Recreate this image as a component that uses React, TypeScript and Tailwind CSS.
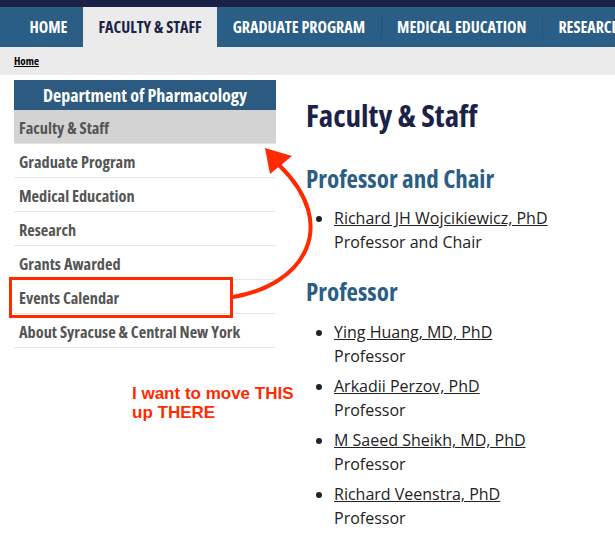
import React from "react";

const cond = "font-['Open_Sans','DejaVu_Sans_Condensed',sans-serif] [font-stretch:75%] font-bold";

const navItems = ["HOME", "FACULTY & STAFF", "GRADUATE PROGRAM", "MEDICAL EDUCATION", "RESEARCH"];
const sideItems = [
  "Faculty & Staff",
  "Graduate Program",
  "Medical Education",
  "Research",
  "Grants Awarded",
  "Events Calendar",
  "About Syracuse & Central New York",
];

const professors = [
  "Ying Huang, MD, PhD",
  "Arkadii Perzov, PhD",
  "M Saeed Sheikh, MD, PhD",
  "Richard Veenstra, PhD",
];

export default function App() {
  return (
    <div className="relative w-[615px] h-[549px] overflow-hidden bg-white font-['Open_Sans',sans-serif]">
      <div className="h-[7px] bg-[#1b2147]" />
      <nav className="h-[40px] bg-[#2a5e86] flex items-stretch pl-[14px] whitespace-nowrap">
        {navItems.map((n, i) => {
          const active = i === 1;
          return (
            <div key={n} className="flex items-center shrink-0">
              {i >= 3 && <div className="w-px h-[24px] bg-[#1f5580]" />}
              <div
                className={`${cond} h-full flex items-center px-[15.5px] text-[16px] ${
                  active ? "bg-[#ebebeb] text-[#1b2147]" : "text-white"
                }`}
              >
                {n}
              </div>
            </div>
          );
        })}
      </nav>
      <div className="h-[28px] bg-[#ebebeb] pl-[14px] flex items-center">
        <span className={`${cond} text-[11px] text-black underline`}>Home</span>
      </div>
      <div className="flex pt-[5px]">
        <aside className="ml-[14px] w-[262px] shrink-0">
          <div className={`${cond} h-[30px] pt-[1px] bg-[#2c5a80] text-white text-[18px] flex items-center justify-center`}>
            Department of Pharmacology
          </div>
          {sideItems.map((s, i) => (
            <div
              key={s}
              className={`${cond} h-[34px] pt-[4px] flex items-center pl-[5px] text-[16.3px] text-[#555] border-b border-[#e6e6e6] ${
                i === 0 ? "bg-[#d3d3d3]" : ""
              }`}
            >
              {s}
            </div>
          ))}
        </aside>
        <main className="ml-[30px] text-[16px] leading-[23.5px] text-[#222]">
          <h1 className={`${cond} text-[31px] leading-[36px] text-[#1b2147] mt-[17px]`}>Faculty &amp; Staff</h1>
          <h2 className={`${cond} text-[25px] leading-[30px] text-[#2b5e85] mt-[30px]`}>Professor and Chair</h2>
          <ul className="list-disc pl-[28px] mt-[14px]">
            <li>
              <span className="underline">Richard JH Wojcikiewicz, PhD</span>
              <br />
              Professor and Chair
            </li>
          </ul>
          <h2 className={`${cond} text-[25px] leading-[30px] text-[#2b5e85] mt-[22px]`}>Professor</h2>
          <ul className="list-disc pl-[28px] mt-[15px]">
            {professors.map((p) => (
              <li key={p} className="mb-[7px]">
                <span className="underline">{p}</span>
                <br />
                Professor
              </li>
            ))}
          </ul>
        </main>
      </div>

      {/* annotation overlay */}
      <div className="absolute left-[9px] top-[277px] w-[224px] h-[41px] border-[3px] border-[#ff2a00]" />
      <div className="absolute left-[132px] top-[384px] text-[17px] leading-[19px] font-bold text-[#ff2a00] font-['Liberation_Sans',Arial,sans-serif]">
        I want to move THIS
        <br />
        up THERE
      </div>
      <svg className="absolute left-0 top-0" width="615" height="549" viewBox="0 0 615 549">
        <path d="M233 297 C 305 285, 340 225, 280 166" fill="none" stroke="#ff2a00" strokeWidth="4" strokeLinecap="round" />
        <polygon points="265,148 292,156 270,174" fill="#ff2a00" />
      </svg>
    </div>
  );
}
